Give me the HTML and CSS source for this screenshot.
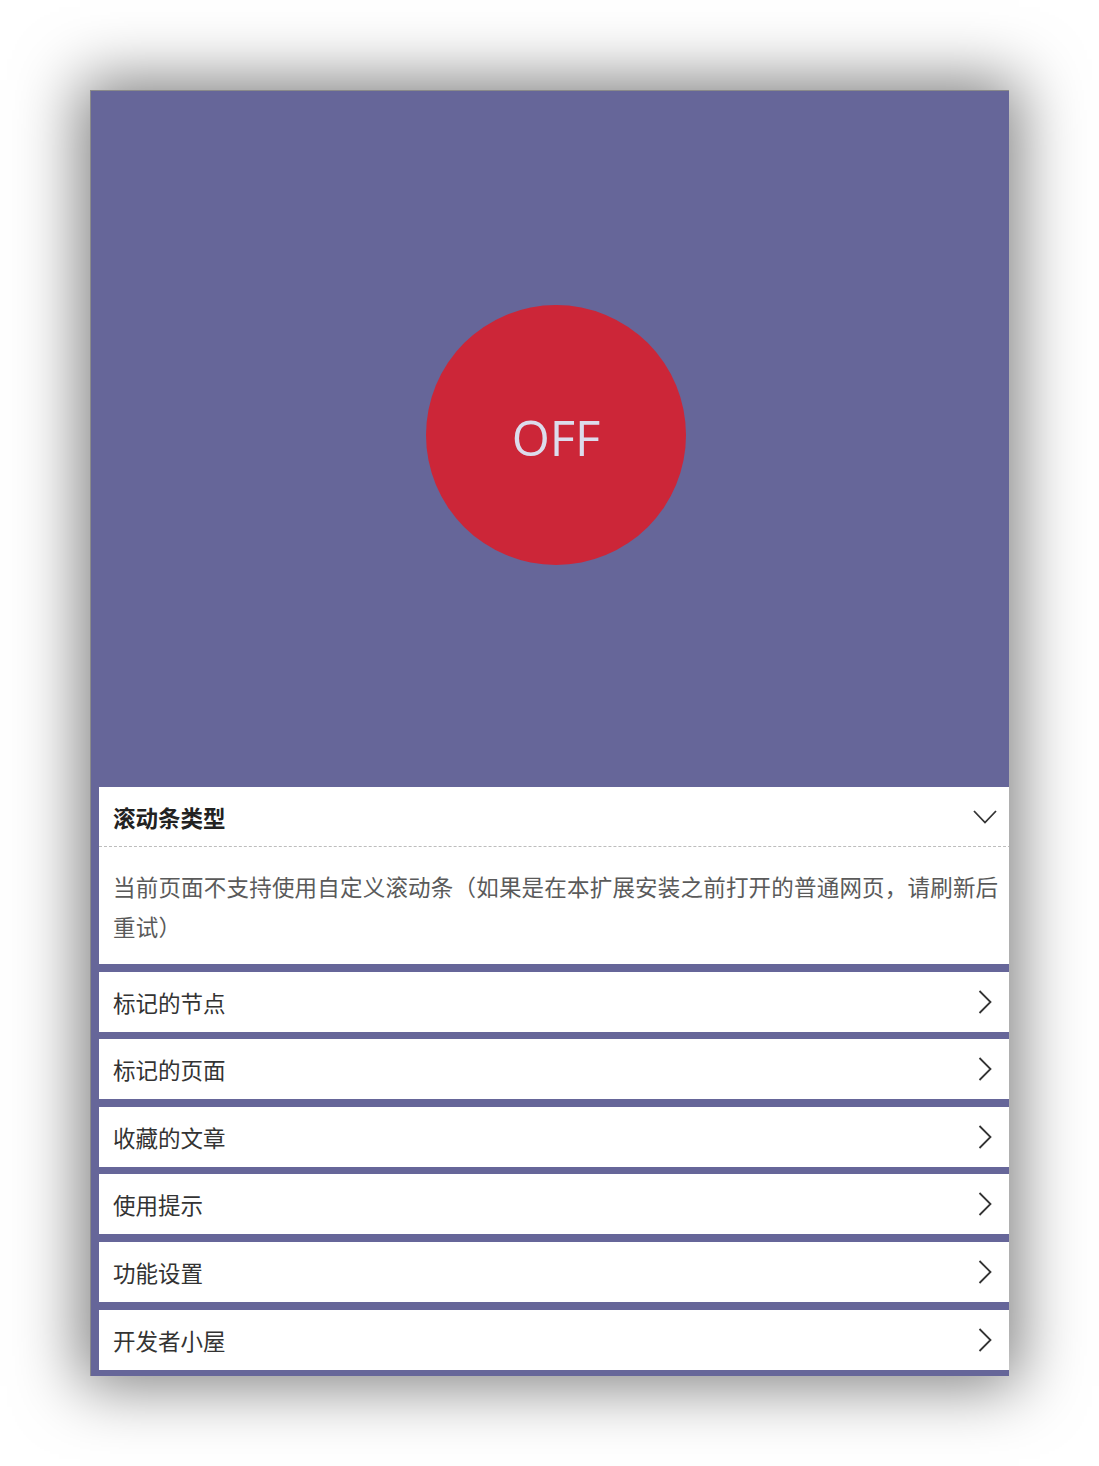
FILE: index.html
```html
<!DOCTYPE html>
<html lang="zh-CN">
<head>
<meta charset="utf-8">
<title>滚动条</title>
<link rel="stylesheet" href="styles.css">
</head>
<body>
<div class="card">
  <div class="panel">
    <div class="hero">
      <div class="power"><span class="power-label">OFF</span></div>
    </div>
    <div class="list">
      <section class="block">
        <div class="block-head">
          <span class="block-title">滚动条类型</span>
          <svg class="chev-down" width="24" height="14" viewBox="0 0 24 14"><path d="M1 1 L12 12.5 L23 1" fill="none" stroke="#333" stroke-width="1.8"/></svg>
        </div>
        <div class="block-body">当前页面不支持使用自定义滚动条（如果是在本扩展安装之前打开的普通网页，请刷新后重试）</div>
      </section>
      <a class="item"><span>标记的节点</span><svg class="chev" width="14" height="24" viewBox="0 0 14 24"><path d="M1.5 1 L12.5 12 L1.5 23" fill="none" stroke="#333" stroke-width="1.8"/></svg></a>
      <a class="item"><span>标记的页面</span><svg class="chev" width="14" height="24" viewBox="0 0 14 24"><path d="M1.5 1 L12.5 12 L1.5 23" fill="none" stroke="#333" stroke-width="1.8"/></svg></a>
      <a class="item"><span>收藏的文章</span><svg class="chev" width="14" height="24" viewBox="0 0 14 24"><path d="M1.5 1 L12.5 12 L1.5 23" fill="none" stroke="#333" stroke-width="1.8"/></svg></a>
      <a class="item"><span>使用提示</span><svg class="chev" width="14" height="24" viewBox="0 0 14 24"><path d="M1.5 1 L12.5 12 L1.5 23" fill="none" stroke="#333" stroke-width="1.8"/></svg></a>
      <a class="item"><span>功能设置</span><svg class="chev" width="14" height="24" viewBox="0 0 14 24"><path d="M1.5 1 L12.5 12 L1.5 23" fill="none" stroke="#333" stroke-width="1.8"/></svg></a>
      <a class="item"><span>开发者小屋</span><svg class="chev" width="14" height="24" viewBox="0 0 14 24"><path d="M1.5 1 L12.5 12 L1.5 23" fill="none" stroke="#333" stroke-width="1.8"/></svg></a>
    </div>
  </div>
</div>
</body>
</html>
```

FILE: styles.css
```css
html, body {
  margin: 0;
  padding: 0;
  background: #ffffff;
}

body {
  font-family: "Noto Sans CJK SC", "Noto Sans", sans-serif;
  padding-bottom: 90px;
}

.card {
  margin: 90px 0 0 90px;
  width: 918px;
  height: 1285px;
  border-top: 1px solid #8a8a8a;
  border-left: 1px solid #8a8a8a;
  overflow: hidden;
  background: #666699;
  box-shadow: 0 0 60px 10px rgba(0, 0, 0, 0.5);
}

.panel {
  width: 930px;
  background: #666699;
}

.hero {
  height: 696px;
  display: flex;
  justify-content: center;
  align-items: flex-start;
  box-sizing: border-box;
  padding-top: 214px;
}

.power {
  width: 260px;
  height: 260px;
  border-radius: 50%;
  background: #cc2638;
  display: flex;
  align-items: center;
  justify-content: center;
}

.power-label {
  font-family: "Open Sans", "Noto Sans", sans-serif;
  font-size: 49px;
  color: #dcdcec;
  line-height: 1;
  margin-top: 4px;
}

.list {
  padding: 0 0 6px 8px;
}

.block {
  background: #ffffff;
}

.block-head {
  height: 60px;
  box-sizing: border-box;
  border-bottom: 1px dashed #bdbdbd;
  display: flex;
  align-items: center;
  justify-content: space-between;
  padding: 0 24px 0 14px;
}

.block-title {
  font-size: 22.5px;
  font-weight: 700;
  color: #222222;
}

.chev-down {
  display: block;
}

.block-body {
  padding: 19px 6px 18px 14px;
  font-size: 22.5px;
  line-height: 40px;
  letter-spacing: 0.2px;
  color: #5a5a5a;
}

.item {
  margin-top: 7.6px;
  height: 60px;
  background: #ffffff;
  display: flex;
  align-items: center;
  justify-content: space-between;
  padding: 0 29px 0 14px;
  font-size: 22.5px;
  color: #333333;
  cursor: pointer;
}

.chev {
  display: block;
}
```
